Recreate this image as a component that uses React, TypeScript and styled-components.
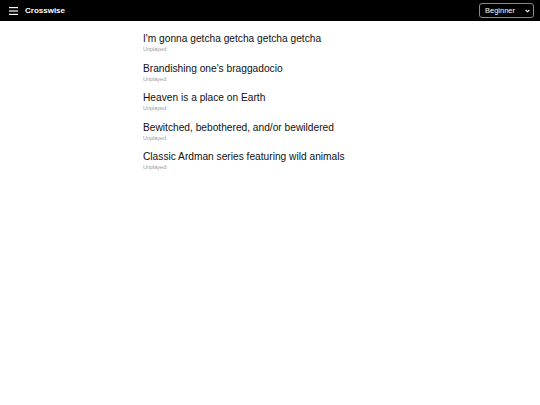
import React from 'react';
import styled, { createGlobalStyle } from 'styled-components';

const GlobalStyle = createGlobalStyle`
  html, body {
    margin: 0;
    padding: 0;
    background: #fff;
    font-family: "Liberation Sans", Arial, sans-serif;
  }
`;

const Header = styled.header({
  height: '21px',
  backgroundColor: '#000',
  display: 'flex',
  alignItems: 'center',
  justifyContent: 'space-between',
  padding: '0 6px 0 9px',
  boxSizing: 'border-box',
})

const Brand = styled.div({
  display: 'flex',
  alignItems: 'center',
  gap: '7px',
})

const Title = styled.span({
  color: '#fff',
  fontSize: '8px',
  fontWeight: 700,
})

const Select = styled.div({
  width: '55px',
  height: '15px',
  boxSizing: 'border-box',
  border: '1px solid #8a8a8a',
  borderRadius: '3px',
  display: 'flex',
  alignItems: 'center',
  justifyContent: 'space-between',
  padding: '0 3px 0 5px',
  color: '#fff',
  fontSize: '7.5px',
})

const Main = styled.main({
  width: '254px',
  margin: '0 auto',
  paddingTop: '11px',
  display: 'flex',
  flexDirection: 'column',
  gap: '8.5px',
})

const Puzzle = styled.div({
  display: 'flex',
  flexDirection: 'column',
})

const Headline = styled.div({
  fontSize: '10.2px',
  color: '#111',
  lineHeight: '13px',
})

const Status = styled.div({
  fontSize: '5.5px',
  color: '#999',
  lineHeight: '7px',
  marginTop: '1px',
})

const puzzles = [
  "I'm gonna getcha getcha getcha getcha",
  "Brandishing one's braggadocio",
  'Heaven is a place on Earth',
  'Bewitched, bebothered, and/or bewildered',
  'Classic Ardman series featuring wild animals',
]

const App: React.FC = () => {
  return (
    <>
      <GlobalStyle />
      <Header>
        <Brand>
          <svg width="9" height="8" viewBox="0 0 9 8">
            <rect x="0" y="0" width="9" height="1.2" fill="#fff" />
            <rect x="0" y="3.4" width="9" height="1.2" fill="#fff" />
            <rect x="0" y="6.8" width="9" height="1.2" fill="#fff" />
          </svg>
          <Title>Crosswise</Title>
        </Brand>
        <Select>
          <span>Beginner</span>
          <svg width="5" height="4" viewBox="0 0 5 4">
            <path d="M0.7 1 L2.5 2.8 L4.3 1" stroke="#fff" strokeWidth="1.1" fill="none" />
          </svg>
        </Select>
      </Header>
      <Main>
        {puzzles.map((p) => (
          <Puzzle key={p}>
            <Headline>{p}</Headline>
            <Status>Unplayed</Status>
          </Puzzle>
        ))}
      </Main>
    </>
  );
};

export default App;
